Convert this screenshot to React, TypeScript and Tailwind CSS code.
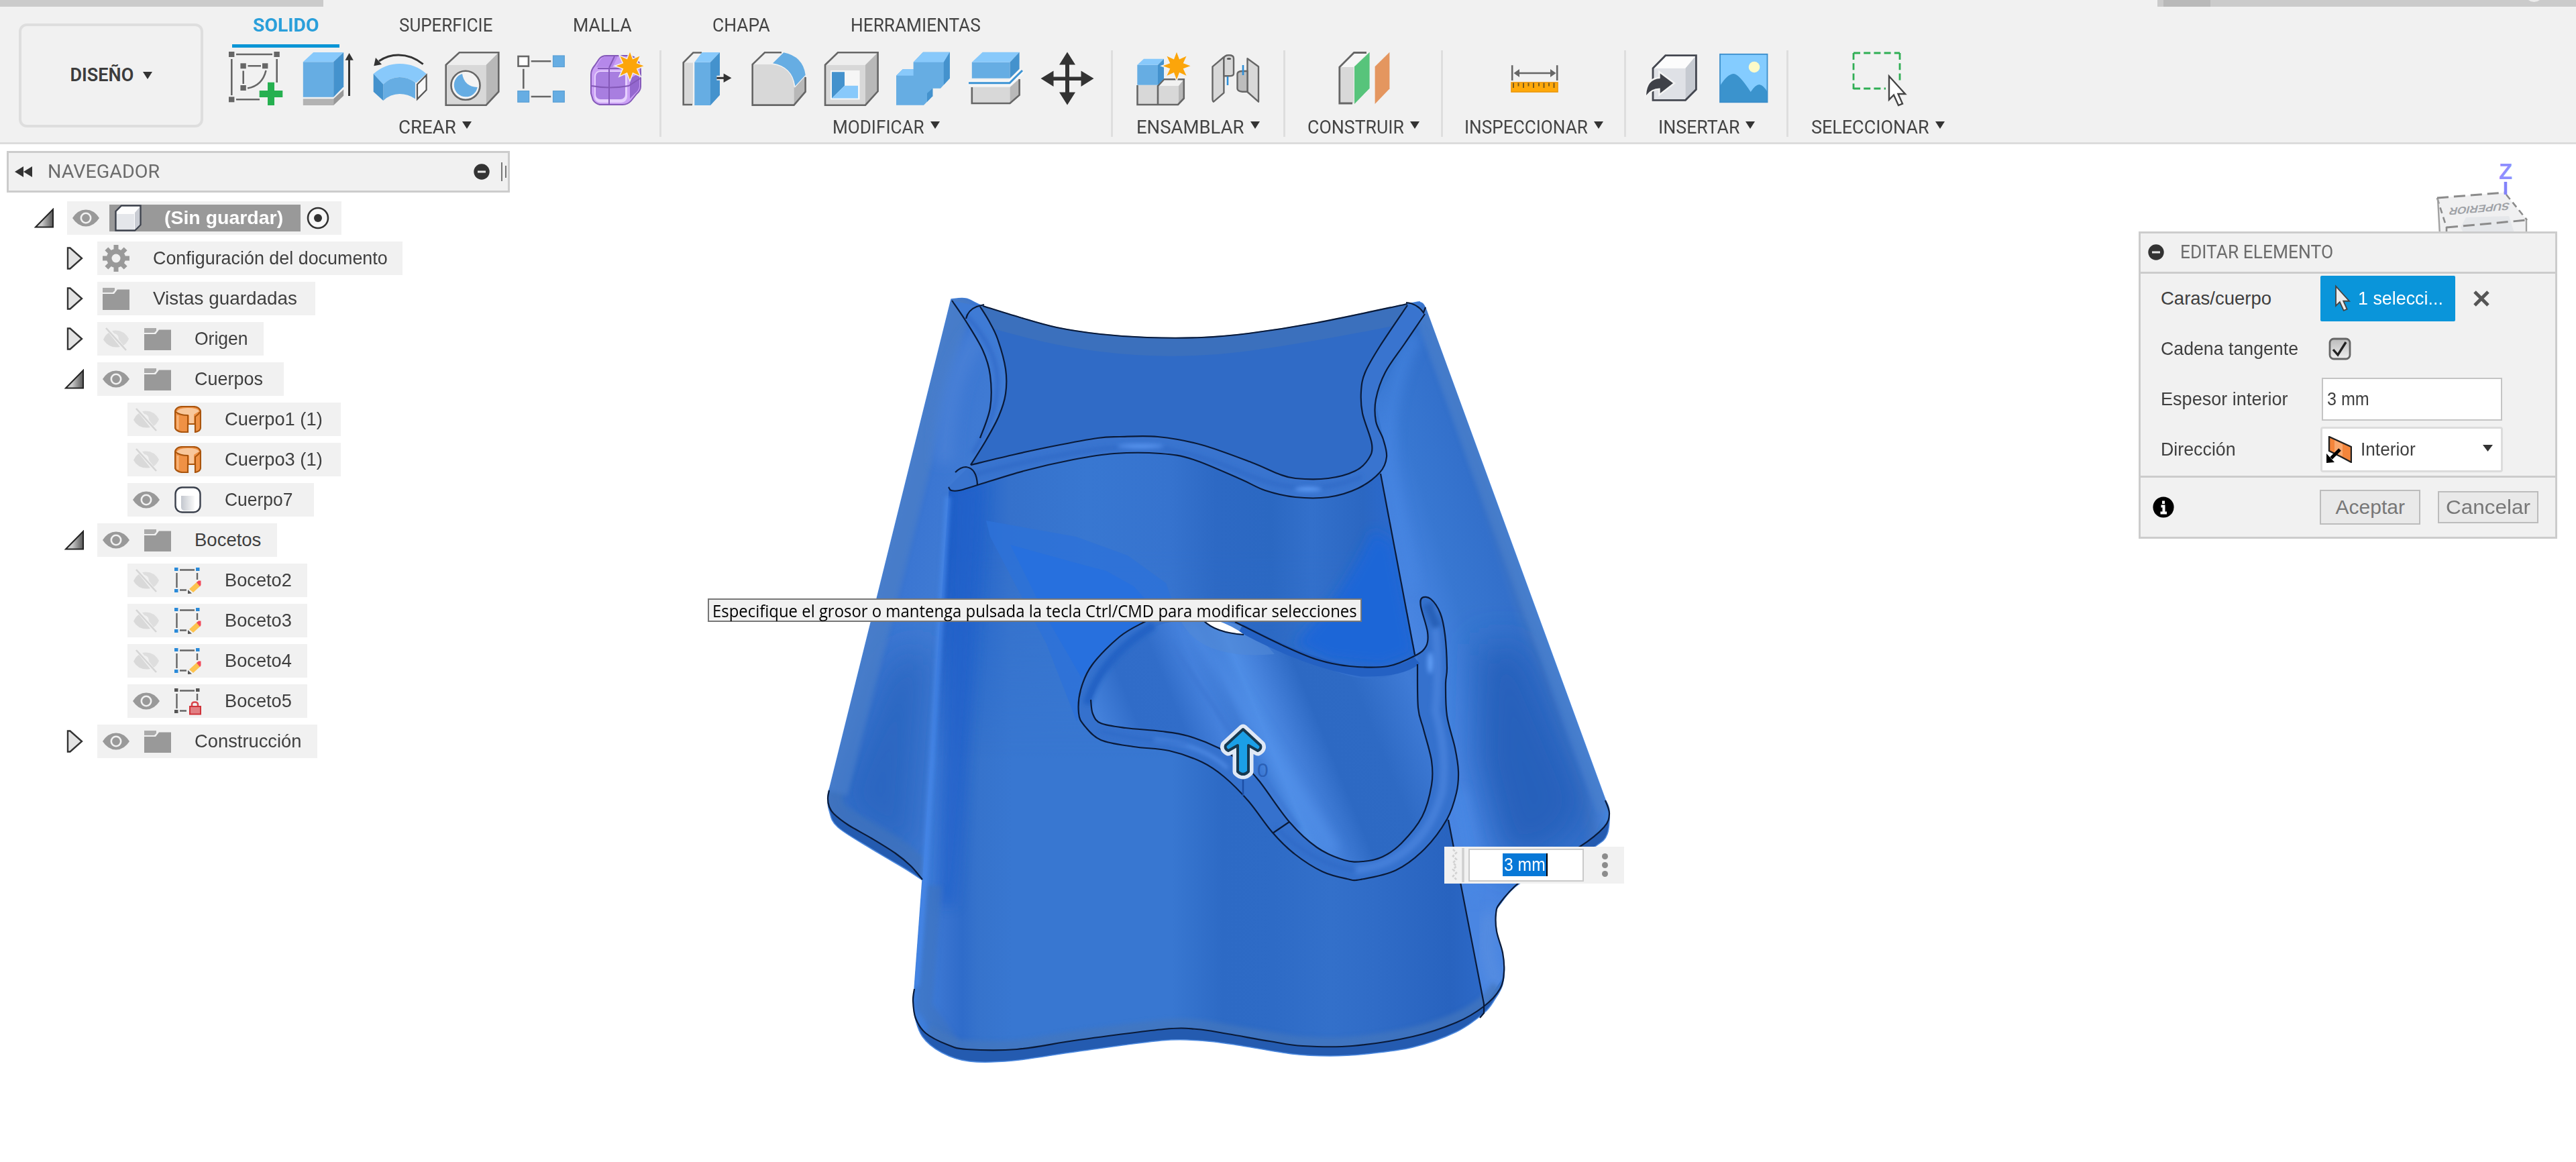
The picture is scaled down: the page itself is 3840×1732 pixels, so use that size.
import { useLayoutEffect, useRef, useState, type ReactNode } from "react";

/* ---------- text fitted to a given width ---------- */

function Fit({ w, className = "", children }: { w: number; className?: string; children: string }) {
  const ref = useRef<HTMLSpanElement>(null);
  const [scale, setScale] = useState(1);
  useLayoutEffect(() => {
    if (ref.current) setScale(w / ref.current.offsetWidth);
  }, [w, children]);
  return (
    <span className="inline-block shrink-0" style={{ width: w }}>
      <span
        ref={ref}
        className={`inline-block origin-left whitespace-nowrap ${className}`}
        style={{ transform: `scaleX(${scale})` }}
      >
        {children}
      </span>
    </span>
  );
}

/* ---------- smooth curve through points ---------- */

type P = [number, number];

function seg(pts: P[]): string {
  let d = "";
  for (let i = 0; i < pts.length - 1; i++) {
    const p0 = pts[Math.max(0, i - 1)];
    const p1 = pts[i];
    const p2 = pts[i + 1];
    const p3 = pts[Math.min(pts.length - 1, i + 2)];
    d += `C${p1[0] + (p2[0] - p0[0]) / 6} ${p1[1] + (p2[1] - p0[1]) / 6} ${p2[0] - (p3[0] - p1[0]) / 6} ${
      p2[1] - (p3[1] - p1[1]) / 6
    } ${p2[0]} ${p2[1]}`;
  }
  return d;
}
const curve = (pts: P[]) => `M${pts[0][0]} ${pts[0][1]}` + seg(pts);
const join = (...parts: P[][]) =>
  parts.map((p, i) => (i === 0 ? curve(p) : `L${p[0][0]} ${p[0][1]}` + seg(p))).join("") + "Z";
const rev = (pts: P[]): P[] => [...pts].reverse();

/* ---------- toolbar icons ---------- */

const FRONT = "#66ade3";
const TOP = "#88c9fb";
const SIDE = "#4492cd";
const LINE = "#666666";

function Ico({ children }: { children: ReactNode }) {
  return (
    <div className="flex w-[107.6px] justify-center">
      <svg viewBox="0 0 80 80" className="size-20 overflow-visible">
        {children}
      </svg>
    </div>
  );
}

function Star({ x, y }: { x: number; y: number }) {
  const pts: string[] = [];
  for (let i = 0; i < 16; i++) {
    const r = i % 2 ? 10.5 : 20.5;
    const a = (Math.PI * i) / 8;
    pts.push(`${x + r * Math.sin(a)},${y - r * Math.cos(a)}`);
  }
  return <polygon points={pts.join(" ")} fill="#fca50a" stroke="#f1f1f1" strokeWidth={3} paintOrder="stroke" />;
}

const IconSketch = () => (
  <Ico>
    <g stroke={LINE} strokeWidth={2.6} fill="none">
      <path d="M11 4H65M4.3 11V65M71.7 11V46M11 71.3H46M28.5 21.3H48M21.7 28.5V48M55.5 28Q50 51 28 54.5" />
    </g>
    <g fill={LINE}>
      {[
        [4.3, 4],
        [71.7, 4],
        [4.3, 71.3],
        [21.7, 21.3],
        [54.3, 21.3],
        [21.7, 54],
      ].map(([x, y]) => (
        <rect key={`${x}-${y}`} x={x - 4.3} y={y - 4} width={8.4} height={8} />
      ))}
    </g>
    <path d="M58 45.7H68V58H80.3V68H68V80H58V68H45.7V58H58Z" fill="#26b050" />
  </Ico>
);

const IconExtrude = () => (
  <Ico>
    <path d="M2.8 15.3H48.2V67.7H2.8Z" fill={FRONT} />
    <path d="M2.8 15.3L18.2 1H63.2L48.2 15.3Z" fill={TOP} />
    <path d="M48.2 15.3L63.2 1V52.3L48.2 67.7Z" fill={SIDE} />
    <path d="M2.8 70.3H48.2V80H2.8Z" fill="#b3b3b3" />
    <path d="M48.2 70.3L63.2 56.3V65.7L48.2 80Z" fill="#989898" />
    <path d="M71.5 66V10" stroke="#333" strokeWidth={3} />
    <path d="M65.5 12.7L71.6 2L77.8 12.7Z" fill="#333" />
  </Ico>
);

const IconRevolve = () => (
  <Ico>
    <path d="M.7 33Q18 18 39.7 18Q63 18 79.7 33L64.5 46.5Q52 38 39.7 38Q26 38 15.3 48.7Z" fill={TOP} />
    <path d="M15.3 48.7Q26 38 39.7 38Q52 38 63 46V70.3Q52 63 39.7 63Q26 63 15.3 73Z" fill={FRONT} />
    <path d="M.7 33L15.3 48.7V73L.7 59.7Z" fill={SIDE} />
    <path d="M66 48.7L79.6 35V57L66 70.8Z" fill="#f8f8f8" stroke="#555" strokeWidth={2.2} />
    <path d="M74.7 18.7Q58 5 38 5Q22 5 9 14" fill="none" stroke="#333" strokeWidth={2.8} />
    <path d="M4 9L13 19L1.3 21.3Z" fill="#333" />
  </Ico>
);

const IconHole = () => (
  <Ico>
    <path d="M.7 19.7H60.7V79.7H.7Z" fill="#d8d8d8" />
    <path d="M.7 19.7L20.7 1.3H79.3L60.7 19.7Z" fill="#eeeeee" />
    <path d="M60.7 19.7L79.3 1.3V59.7L60.7 79.7Z" fill="#b8b8b8" />
    <path d="M.7 19.7L20.7 1.3H79.3V59.7L60.7 79.7H.7Z" fill="none" stroke={LINE} strokeWidth={2.6} />
    <circle cx={30} cy={50.3} r={21.5} fill="#f4f4f4" stroke={LINE} strokeWidth={2.6} />
    <path d="M25 33A17.6 17.6 0 1 0 47.7 53Q28 52 25 33Z" fill={FRONT} />
  </Ico>
);

const IconPattern = () => (
  <Ico>
    <rect x={1.5} y={7} width={15.4} height={14.6} fill="#fff" stroke={LINE} strokeWidth={2.6} />
    <g fill={FRONT} stroke="#5a9fd4" strokeWidth={1.2}>
      <rect x={53.5} y={6} width={16.8} height={16.6} />
      <rect x={0.8} y={58.6} width={16.8} height={16.6} />
      <rect x={53.5} y={58.6} width={16.8} height={16.6} />
    </g>
    <path d="M20.7 14.3H50.3M9.3 25.7V55.3M20.7 67H50.3" stroke={LINE} strokeWidth={2.6} />
  </Ico>
);

const IconForm = () => (
  <Ico>
    <path
      d="M2 34Q2 27 8 20L14 11Q18 6 25 6H58Q76 8 76 30V52Q76 58 70 63L62 73Q57 79 49 79H15Q8 77 5 72L2 62Z"
      fill="#caa0f5"
      stroke="#8459b8"
      strokeWidth={2}
    />
    <path d="M60 40L74 32V52Q73 58 68 62L60 70Z" fill="#9468cf" />
    <path d="M22 7H42L34 23H10Q16 10 22 7Z" fill="#b588ea" />
    <rect x={7} y={28} width={49} height={48} rx={9} fill="#e6d0fd" />
    <rect x={9} y={30} width={44} height={41} rx={7} fill="#a87ee0" />
    <path d="M29 24V78M3 51Q30 56 58 51L75 40M29 24L37 7M12 25H60" fill="none" stroke="#8459b8" strokeWidth={2} />
    <Star x={60} y={21.3} />
  </Ico>
);

const IconPress = () => (
  <Ico>
    <path d="M4.7 16.3H19V79H4.7Z" fill="#d8d8d8" />
    <path d="M4.7 16.3L19.3 1.5H31L20 16.3Z" fill="#f1f1f1" />
    <path d="M32 1.5H19.3L4.7 16.3V79H18" fill="none" stroke={LINE} strokeWidth={2.6} />
    <path d="M21.3 15.7H45V80H21.3Z" fill={FRONT} />
    <path d="M21.3 15.7L32.5 1H59L45 15.7Z" fill={TOP} />
    <path d="M45 15.7L59 1V64.7L45 80Z" fill={SIDE} />
    <path d="M54.4 39.3H66M64.6 32.5V46L76.5 39.3Z" fill="#333" stroke="#f1f1f1" strokeWidth={7} />
    <path d="M54.4 39.3H67" stroke="#333" strokeWidth={3} />
    <path d="M64.6 32.5V46L76.5 39.3Z" fill="#333" />
  </Ico>
);

const IconFillet = () => (
  <Ico>
    <path d="M.6 19H29.3Q60 22 62.5 51.3V79.7H.6Z" fill="#d8d8d8" />
    <path d="M.6 19L19 1.3H45L30 19Z" fill="#f1f1f1" />
    <path d="M62.5 53L79.7 36V59.7L62.5 79.7Z" fill="#b8b8b8" />
    <path d="M44 1.3H19L.7 19V79.6H62.5L79.6 59.7V38" fill="none" stroke={LINE} strokeWidth={2.6} />
    <path d="M31 17.3L47.2 1.3Q76 7 79.7 34.7L64.4 51.3Q60 22 31 17.3Z" fill={FRONT} stroke="#f1f1f1" strokeWidth={2.4} paintOrder="stroke" />
  </Ico>
);

const IconShell = () => (
  <Ico>
    <path d="M1 19.7H61V79.7H1Z" fill="#d8d8d8" />
    <path d="M1 19.7L20 1.3H79.6L61 19.7Z" fill="#eeeeee" />
    <path d="M61 19.7L79.6 1.3V59L61 79.7Z" fill="#b8b8b8" />
    <path d="M1 19.7L20 1.3H79.6V59L61 79.7H1Z" fill="none" stroke={LINE} strokeWidth={2.6} />
    <path d="M9 28H52.6V71.6H9Z" fill="#f6f6f6" />
    <path d="M11 30.3H30V50.7L11 69.5Z" fill={SIDE} />
    <path d="M30 50.7H50V69.5H11Z" fill={TOP} />
  </Ico>
);

const IconCombine = () => (
  <Ico>
    <path d="M0 35.7L9.6 26.3H25.6V15.7L40 .7H79.8V39.7L66 54.7H54.3V66.3L41 79.7H0Z" fill={FRONT} />
    <path d="M25.6 15.7L40 .7H79.8L70.8 15.7Z" fill={TOP} />
    <path d="M0 35.7L9.6 26.3H25.6V35.7Z" fill={TOP} />
    <path d="M70.8 15.7L79.8 .7V39.7L70.8 49.5Z" fill={SIDE} />
    <path d="M46 62L54.3 54.7V66.3L46 74.7Z" fill={SIDE} />
  </Ico>
);

const IconSplit = () => (
  <Ico>
    <path d="M4.8 15.7H61.5V39.7H4.8Z" fill={FRONT} />
    <path d="M4.8 15.7L20.7 .7H75.6L61.5 15.7Z" fill={TOP} />
    <path d="M61.5 15.7L75.6 .7V25.7L61.5 39.7Z" fill={SIDE} />
    <path d="M4.8 53H61.5V77H4.8Z" fill="#d8d8d8" />
    <path d="M61.5 53L75.6 40.3V64.7L61.5 77Z" fill="#b8b8b8" />
    <path d="M4.8 53V77H61.5L75.6 64.7V41" fill="none" stroke={LINE} strokeWidth={2.6} />
    <path d="M0 46.7H61L80 28" fill="none" stroke="#f8f8f8" strokeWidth={8} />
    <path d="M0 46.7H61L80 28" fill="none" stroke="#3d94d4" strokeWidth={3} />
  </Ico>
);

const IconMove = () => (
  <Ico>
    <path
      d="M40 .5L52 19.5H43V37.5H60.5V28.5L79.5 40L60.5 52V43H43V60.5H52L40 79.5L28 60.5H37V43H19.5V52L.5 40L19.5 28.5V37.5H37V19.5H28Z"
      fill="#333"
    />
  </Ico>
);

const IconComponent = () => (
  <Ico>
    <path d="M1.3 49.7H63V79.7H1.3Z" fill="#d8d8d8" />
    <path d="M32 51L41 41.3H70.8L63 51Z" fill="#f1f1f1" />
    <path d="M63 51L70.8 41.3V69.7L63 79.7Z" fill="#b8b8b8" />
    <path d="M1.5 50V79H62L70.8 69.7V41.3H41L32 51V79" fill="none" stroke={LINE} strokeWidth={2.6} />
    <path d="M1.3 19.7H32V49.7H1.3Z" fill={FRONT} />
    <path d="M1.3 19.7L11 10.7H41L32 19.7Z" fill={TOP} />
    <path d="M32 19.7L41 10.7V40.3L32 49.7Z" fill={SIDE} />
    <Star x={60} y={21.3} />
  </Ico>
);

const IconJoint = () => (
  <Ico>
    <g fill="#d8d8d8" stroke={LINE} strokeWidth={2.4} strokeLinejoin="round">
      <path d="M6.5 22.3L23.4 8V61.3L8 74.7Q6.5 74 6.5 70Z" />
      <path d="M23.4 10Q24 5.3 31 5.3Q38 5.3 38 10V33Q38 36.3 31 36.3H23.4Z" />
      <path d="M58.5 10.3L75 22.3V74.7L58.5 60Z" />
      <path d="M43.5 33Q44 29 51 29H58.5V59.7H51Q43.5 59 43.5 55Z" fill="#bdbdbd" />
    </g>
    <ellipse cx={31} cy={10.5} rx={3.2} ry={1.6} fill="#555" />
    <path d="M29 37V50M52 20V35" stroke="#2f8fd8" strokeWidth={2.6} />
  </Ico>
);

const IconConstruct = () => (
  <Ico>
    <path d="M2.5 23H24V77H2.5Z" fill="#d8d8d8" />
    <path d="M2.5 23L24.4 1.3H45L25 23Z" fill="#f6f6f6" />
    <path d="M43 1.5H24.4L2.8 23V77H22" fill="none" stroke={LINE} strokeWidth={2.8} />
    <path d="M25 22.3L47.6 .7V54.7L25 78Z" fill="#57c47b" stroke="#f1f1f1" strokeWidth={2} paintOrder="stroke" />
    <path d="M55.6 22.3L77.4 .7V55.3L55.6 78Z" fill="#e4965f" />
  </Ico>
);

const IconMeasure = () => (
  <Ico>
    <path d="M6.2 20.3V43M73.2 20.3V43M14 32H66" stroke={LINE} strokeWidth={2.6} />
    <path d="M8.5 32L17 26V38ZM71.5 32L63 26V38Z" fill={LINE} />
    <rect x={5} y={46} width={69} height={14} fill="#ffa90a" stroke="#eb960b" strokeWidth={1.6} />
    <path
      d="M8 46.5V54M15.5 46.5V51.5M23 46.5V54M30.5 46.5V51.5M38 46.5V54M46 46.5V51.5M53.5 46.5V54M61 46.5V51.5M68.5 46.5V54"
      stroke="#7a5a1c"
      strokeWidth={2}
    />
  </Ico>
);

const IconInsert = () => (
  <Ico>
    <path d="M13 24.7H61.5V72.3H13Z" fill="#dfe1e6" />
    <path d="M13 24.7L31.7 5.7H77.4L61.5 24.7Z" fill="#fcfcfc" />
    <path d="M61.5 24.7L77.4 5.7V56.3L61.5 72.3Z" fill="#c6cad1" />
    <path d="M13 24.7L31.7 5.7H77.4V56.3L61.5 72.3H13Z" fill="none" stroke="#444750" strokeWidth={2.8} />
    <path
      d="M43 47L23.7 32.5V40Q4 41 3 65Q11 54 23.7 54.5V62Z"
      fill="#3f4148"
      stroke="#f4f4f4"
      strokeWidth={5}
      paintOrder="stroke"
    />
  </Ico>
);

const IconImage = () => (
  <Ico>
    <rect x={5} y={3.8} width={70.5} height={71.5} fill="#84ccff" />
    <path d="M5 51Q16 33 25.5 33Q33 33 50.7 60Q58 49 63.5 49Q70 50 75.5 60V75.3H5Z" fill="#3b93cd" />
    <circle cx={56} cy={23} r={8.3} fill="#fdfbc9" />
    <rect x={5} y={3.8} width={70.5} height={71.5} fill="none" stroke="#3b8ecb" strokeWidth={1.8} />
  </Ico>
);

const CURSOR = "M0 0V35L7 28L14 43.5L20 41L13.5 26.5H24Z";

const IconSelect = () => (
  <Ico>
    <path d="M2 2H71" stroke="#2fae54" strokeWidth={2.8} strokeDasharray="10 5.2" />
    <path d="M2 55H50" stroke="#2fae54" strokeWidth={2.8} strokeDasharray="10 5.2" />
    <path d="M2 2V56M71 2V46" stroke="#2fae54" strokeWidth={2.8} strokeDasharray="10 5.2" />
    <path d={CURSOR} transform="translate(55 36.5)" fill="#fff" stroke="#444" strokeWidth={2.4} />
  </Ico>
);

/* ---------- toolbar ---------- */

const Caret = () => (
  <svg viewBox="0 0 14 11" className="h-[11px] w-[14px]">
    <path d="M0 0H14L7 11Z" fill="#333" />
  </svg>
);

function Group({ width, label, labelWidth, last = false, children }: { width: string; label: string; labelWidth: number; last?: boolean; children: ReactNode }) {
  return (
    <div className={`flex h-[129px] flex-col items-center ${width} ${last ? "" : "border-r-3 border-[#dedede]"}`}>
      <div className="flex pt-0.5 pl-[3px]">{children}</div>
      <div className="mt-3.5 flex h-[38px] items-center gap-[9px] leading-[38px]">
        <Fit w={labelWidth}>{label}</Fit>
        <div className="pb-2">
          <Caret />
        </div>
      </div>
    </div>
  );
}

function Toolbar() {
  return (
    <header className="flex h-[215px] flex-col border-b-3 border-[#dcdcdc] bg-[#f1f1f1] font-['Roboto','Liberation_Sans',sans-serif] text-[28px] text-[#444]">
      <div className="flex h-2.5 justify-between">
        <div className="w-[482px] bg-[#cbcbcb]" />
        <div className="flex w-[624px] overflow-hidden bg-[#cbcbcb] pl-[9px]">
          <div className="w-[70px] bg-[#b9b9b9]" />
          <div className="-mt-6 ml-[469px] size-[27px] rounded-full bg-[#ececec]" />
        </div>
      </div>
      <div className="flex">
        <div className="pt-[25px] pl-7">
          <div className="flex h-[155px] w-[275px] items-center justify-center gap-[13px] rounded-xl border-4 border-[#dedede] text-[27px] font-semibold text-[#3c3c3c]">
            <Fit w={95}>DISEÑO</Fit>
            <Caret />
          </div>
        </div>
        <div className="flex flex-col">
          <nav className="flex h-[65px] gap-[120px] pl-[43px] leading-14">
            <div className="flex h-[61px] w-40 flex-col items-center justify-between">
              <Fit w={98} className="font-bold text-[#2a9fda]">
                SOLIDO
              </Fit>
              <div className="h-2 w-40 bg-[#0b95d5]" />
            </div>
            <div className="-ml-[31px] flex gap-[120px]">
              <Fit w={139}>SUPERFICIE</Fit>
              <Fit w={88}>MALLA</Fit>
              <Fit w={86}>CHAPA</Fit>
              <Fit w={194}>HERRAMIENTAS</Fit>
            </div>
          </nav>
          <div className="flex pl-[11px]">
            <Group width="w-[672px]" label="CREAR" labelWidth={86}>
              <IconSketch />
              <IconExtrude />
              <IconRevolve />
              <IconHole />
              <IconPattern />
              <IconForm />
            </Group>
            <Group width="w-[673px]" label="MODIFICAR" labelWidth={137}>
              <IconPress />
              <IconFillet />
              <IconShell />
              <IconCombine />
              <IconSplit />
              <IconMove />
            </Group>
            <Group width="w-[257px]" label="ENSAMBLAR" labelWidth={161}>
              <IconComponent />
              <IconJoint />
            </Group>
            <Group width="w-[235px]" label="CONSTRUIR" labelWidth={144}>
              <IconConstruct />
            </Group>
            <Group width="w-[273px]" label="INSPECCIONAR" labelWidth={184}>
              <IconMeasure />
            </Group>
            <Group width="w-[242px]" label="INSERTAR" labelWidth={121}>
              <IconInsert />
              <IconImage />
            </Group>
            <Group width="w-[267px]" label="SELECCIONAR" labelWidth={176} last>
              <IconSelect />
            </Group>
          </div>
        </div>
      </div>
    </header>
  );
}

/* ---------- browser tree ---------- */

const MinusDot = () => (
  <svg viewBox="0 0 24 24" className="size-6">
    <circle cx={12} cy={12} r={11.7} fill="#333" />
    <path d="M6 12H18" stroke="#e8e8e8" strokeWidth={3} />
  </svg>
);

const Eye = () => (
  <svg viewBox="0 0 40 40" className="size-10">
    <path d="M0 20Q8 7.5 20 7.5Q32 7.5 40 20Q32 32.5 20 32.5Q8 32.5 0 20Z" fill="#999" />
    <circle cx={20} cy={20} r={7.2} fill="#999" stroke="#f1f1f1" strokeWidth={2.6} />
  </svg>
);

const EyeOff = () => (
  <svg viewBox="0 0 40 40" className="size-10">
    <path d="M1 21Q5 13 9 11L26 32Q9 35 1 21Z" fill="#d9d9d9" />
    <path d="M14 8Q31 5 39 20Q36 27 31 30L24 21Q24 13 17 12Z" fill="#dedede" />
    <path d="M5 4L35 37" stroke="#d5d5d5" strokeWidth={2.6} />
  </svg>
);

const Folder = () => (
  <svg viewBox="0 0 40 40" className="size-10">
    <path d="M0 4H18V8L15 11H0Z" fill="#aaa" />
    <path d="M0 13H17L22 6.5H40V37H0Z" fill="#999" />
  </svg>
);

const Gear = () => (
  <svg viewBox="0 0 40 40" className="size-10">
    <g fill="#999">
      <path d="M16.5 0H23.5V40H16.5Z" />
      <path d="M16.5 0H23.5V40H16.5Z" transform="rotate(45 20 20)" />
      <path d="M16.5 0H23.5V40H16.5Z" transform="rotate(90 20 20)" />
      <path d="M16.5 0H23.5V40H16.5Z" transform="rotate(135 20 20)" />
      <circle cx={20} cy={20} r={14} />
    </g>
    <circle cx={20} cy={20} r={6.5} fill="#f1f1f1" />
  </svg>
);

const BodyOrange = () => (
  <svg viewBox="0 0 40 40" className="size-10">
    <path d="M1 8Q3 1 12 1H28Q37 1 39 8V33Q38 38 31 39V27H20V39H11Q3 38 1 33Z" fill="#ef9145" stroke="#a9540c" strokeWidth={2.2} />
    <path d="M3 9Q6 3 20 3Q34 3 37 8Q30 12 29 13V26H22V14Q8 14 3 9Z" fill="#f8c79b" />
    <path d="M2 9Q8 14 20 14V39M31 39V16Q36 13 38 9" fill="none" stroke="#a9540c" strokeWidth={2} />
    <path d="M5 14V35" stroke="#f9b67c" strokeWidth={3} />
  </svg>
);

const BodySolid = () => (
  <svg viewBox="0 0 40 40" className="size-10">
    <defs>
      <linearGradient id="cyl" x1="0" x2="1">
        <stop offset="0" stopColor="#c3c7ce" />
        <stop offset="1" stopColor="#fafafa" />
      </linearGradient>
    </defs>
    <rect x={1.5} y={1.5} width={37} height={37} rx={10} fill="#fff" stroke="#3b414d" strokeWidth={2.4} />
    <path d="M10 14H30V36H14Q10 35 10 31Z" fill="url(#cyl)" />
  </svg>
);

const SketchIcon = ({ locked = false }: { locked?: boolean }) => (
  <svg viewBox="0 0 40 40" className="size-10 overflow-visible">
    <path d="M8 4.5H30M3.5 9V31M34 9V19M8 34.5H18" stroke="#666" strokeWidth={2.4} />
    <g fill={locked ? "#555" : "#2a8ad8"}>
      <rect x={0} y={1} width={5.5} height={5} />
      <rect x={32} y={1} width={5.5} height={5} />
      <rect x={0} y={33} width={5.5} height={5} />
    </g>
    {locked ? (
      <g>
        <path d="M26 28V25Q26 21.5 30.5 21.5Q35 21.5 35 25V28" fill="none" stroke="#d9484e" strokeWidth={2.6} />
        <rect x={23} y={28} width={16} height={11.5} fill="#e27f83" stroke="#cf3339" strokeWidth={2} />
      </g>
    ) : (
      <g>
        <path d="M22 33L34 22L39 28L28 38Z" fill="#fcc34f" />
        <path d="M33 23L36 20.5H39.5V27L38 29Z" fill="#f2495a" />
        <path d="M20 34L26 39.5L20 40Z" fill="#555" />
      </g>
    )}
  </svg>
);

const Expanded = () => (
  <svg viewBox="0 0 30 30" className="size-[30px]">
    <defs>
      <linearGradient id="tri" x1="0.1" x2="1">
        <stop offset="0.3" stopColor="#c9c9c9" />
        <stop offset="1" stopColor="#555" />
      </linearGradient>
    </defs>
    <path d="M2 28.5L28 2V28.5Z" fill="url(#tri)" stroke="#222" strokeWidth={2} />
  </svg>
);

const Collapsed = () => (
  <svg viewBox="0 0 30 34" className="h-[34px] w-[30px]">
    <path d="M5 1.5H8.5L26 17L8.5 32.5H5Z" fill="#e3e3e3" stroke="#333" strokeWidth={2.4} />
  </svg>
);

type Item = {
  level: 2 | 3;
  arrow?: "open" | "closed";
  eye?: "on" | "off";
  icon: ReactNode;
  name: string;
  textWidth: number;
  width: number;
};

const ITEMS: Item[] = [
  { level: 2, arrow: "closed", icon: <Gear />, name: "Configuración del documento", textWidth: 350, width: 455 },
  { level: 2, arrow: "closed", icon: <Folder />, name: "Vistas guardadas", textWidth: 215, width: 325 },
  { level: 2, arrow: "closed", eye: "off", icon: <Folder />, name: "Origen", textWidth: 80, width: 248 },
  { level: 2, arrow: "open", eye: "on", icon: <Folder />, name: "Cuerpos", textWidth: 102, width: 278 },
  { level: 3, eye: "off", icon: <BodyOrange />, name: "Cuerpo1 (1)", textWidth: 146, width: 318 },
  { level: 3, eye: "off", icon: <BodyOrange />, name: "Cuerpo3 (1)", textWidth: 146, width: 318 },
  { level: 3, eye: "on", icon: <BodySolid />, name: "Cuerpo7", textWidth: 102, width: 278 },
  { level: 2, arrow: "open", eye: "on", icon: <Folder />, name: "Bocetos", textWidth: 99, width: 268 },
  { level: 3, eye: "off", icon: <SketchIcon />, name: "Boceto2", textWidth: 100, width: 268 },
  { level: 3, eye: "off", icon: <SketchIcon />, name: "Boceto3", textWidth: 100, width: 268 },
  { level: 3, eye: "off", icon: <SketchIcon />, name: "Boceto4", textWidth: 100, width: 268 },
  { level: 3, eye: "on", icon: <SketchIcon locked />, name: "Boceto5", textWidth: 100, width: 268 },
  { level: 2, arrow: "closed", eye: "on", icon: <Folder />, name: "Construcción", textWidth: 160, width: 328 },
];

function TreeRow({ item }: { item: Item }) {
  return (
    <div className={`flex h-[50px] items-center ${item.level === 2 ? "pl-24" : "pl-[190px]"}`}>
      {item.level === 2 && <div className="w-[49px]">{item.arrow === "open" ? <Expanded /> : <Collapsed />}</div>}
      <div className="flex h-[50px] items-center bg-[#f1f1f1] pl-2" style={{ width: item.width }}>
        {item.eye && <div className="mr-[22px]">{item.eye === "on" ? <Eye /> : <EyeOff />}</div>}
        {item.icon}
        <div className="ml-[35px] flex">
          <Fit w={item.textWidth}>{item.name}</Fit>
        </div>
      </div>
    </div>
  );
}

function Navigator() {
  return (
    <aside className="w-[770px] pt-2.5 text-[27.5px] leading-[46px] text-[#3f3f3f]">
      <div className="ml-2.5 flex h-[62px] w-[750px] items-center border-3 border-[#cccccc] bg-[#f1f1f1] pl-[9px] text-[#6c6c6c]">
        <svg viewBox="0 0 26 16" className="h-4 w-[26px]">
          <path d="M13 0V16L0 8ZM26 0V16L13 8Z" fill="#333" />
        </svg>
        <div className="ml-[23px] flex grow">
          <Fit w={167} className="font-['Roboto','Liberation_Sans',sans-serif] text-[28px]">
            NAVEGADOR
          </Fit>
        </div>
        <MinusDot />
        <div className="mr-0.5 ml-[17px] flex items-center gap-1">
          <div className="h-7 w-0.5 bg-[#777]" />
          <div className="h-[18px] w-0.5 bg-[#777]" />
        </div>
      </div>
      <div className="flex flex-col gap-2.5 pt-[13px]">
        <div className="flex h-[50px] items-center pl-[51px]">
          <div className="w-[49px]">
            <Expanded />
          </div>
          <div className="flex h-[50px] w-[409px] items-center bg-[#f1f1f1] pl-2">
            <Eye />
            <div className="ml-[15px] flex h-10 w-[285px] items-center bg-[#999] pl-2">
              <svg viewBox="0 0 40 40" className="size-10">
                <path d="M1.5 10L10 1.5H38.5V30L30 38.5H1.5Z" fill="#fdfdfd" stroke="#3d424d" strokeWidth={2.4} />
                <path d="M3 14H29V37H3Z" fill="#e4e6ea" />
                <path d="M30 12L37 4V30L30 37Z" fill="#c9ccd3" />
              </svg>
              <div className="ml-[34px] flex">
                <Fit w={177} className="font-bold text-white">
                  (Sin guardar)
                </Fit>
              </div>
            </div>
            <svg viewBox="0 0 34 34" className="ml-[9px] size-[34px]">
              <circle cx={17} cy={17} r={15} fill="#f8f8f8" stroke="#333" strokeWidth={2.6} />
              <circle cx={17} cy={17} r={6} fill="#333" />
            </svg>
          </div>
        </div>
        {ITEMS.map((item) => (
          <TreeRow key={item.name} item={item} />
        ))}
      </div>
    </aside>
  );
}

/* ---------- modelled body ---------- */

const topEdge: P[] = [[1418, 446], [1440, 445], [1465, 456], [1520, 473], [1575, 488], [1640, 498], [1710, 503], [1791, 503], [1861, 497], [1963, 481], [2098, 453], [2118, 451], [2125, 459]];
const rightLow: P[] = [[2393, 1192], [2399, 1208], [2396, 1243], [2379, 1261], [2330, 1288], [2265, 1317], [2236, 1348], [2230, 1362], [2231, 1388], [2242, 1435], [2240, 1467], [2228, 1490], [2212, 1510], [2171, 1538], [2106, 1561], [2036, 1571], [1983, 1574], [1926, 1571], [1840, 1557], [1788, 1551], [1731, 1551], [1608, 1567], [1510, 1581], [1445, 1582], [1404, 1569], [1375, 1545], [1363, 1510], [1363, 1474]];
const leftLow: P[] = [[1375, 1312], [1351, 1296], [1302, 1267], [1249, 1233], [1236, 1208], [1234, 1186], [1237, 1174]];
const leftHem: P[] = [[1236, 1178], [1234, 1190], [1236, 1202], [1243, 1213], [1265, 1230], [1300, 1250], [1335, 1272], [1358, 1291], [1375, 1311]];
const hem: P[] = [[1363, 1474], [1361, 1492], [1365, 1518], [1380, 1540], [1412, 1557], [1441, 1564], [1516, 1564], [1608, 1550], [1735, 1534], [1784, 1534], [1830, 1541], [1893, 1552], [1942, 1559], [2016, 1559], [2106, 1545], [2171, 1524], [2212, 1500], [2236, 1474], [2242, 1448], [2240, 1420], [2231, 1388], [2230, 1362], [2236, 1346], [2265, 1315], [2310, 1285], [2355, 1262], [2391, 1233], [2399, 1213], [2393, 1193]];

const ribLeftOuter: P[] = [[1461, 457], [1474, 478], [1487, 505], [1499, 550], [1499, 587], [1489, 620], [1470, 656], [1447, 693]];
const ribLeftInner: P[] = [[1419, 448], [1440, 479], [1465, 522], [1476, 559], [1476, 608], [1461, 653]];
const ribTop: P[] = [[1447, 693], [1514, 677], [1570, 665], [1636, 653], [1669, 651], [1726, 651], [1791, 663], [1865, 689], [1905, 706], [1931, 713], [1980, 713], [2020, 702], [2040, 684], [2045, 662], [2031, 616], [2029, 583], [2035, 555], [2057, 516], [2098, 455]];
const ribBottom: P[] = [[1414, 726], [1418, 731], [1430, 731], [1457, 723], [1526, 702], [1600, 685], [1661, 676], [1730, 676], [1779, 685], [1849, 714], [1886, 731], [1931, 741], [1980, 741], [2024, 728], [2057, 704], [2067, 681], [2062, 655], [2051, 628], [2051, 595], [2065, 555], [2094, 512], [2124, 468]];

const pocketOuter: P[] = [[1735, 914], [1706, 927], [1669, 949], [1628, 991], [1611, 1028], [1608, 1063], [1616, 1081], [1641, 1103], [1690, 1113], [1743, 1119], [1792, 1136], [1825, 1158], [1861, 1194], [1897, 1241], [1930, 1273], [1971, 1299], [2008, 1310], [2028, 1311], [2081, 1297], [2124, 1265], [2157, 1221], [2171, 1182], [2174, 1150], [2169, 1115], [2157, 1067], [2155, 1020], [2157, 995], [2154, 946], [2147, 914], [2133, 893], [2120, 891], [2118, 904], [2128, 942], [2126, 963], [2110, 977], [2069, 993], [2012, 993], [1963, 983], [1910, 961], [1841, 927]];
const pocketInner: P[] = [[1626, 1043], [1629, 1064], [1641, 1078], [1678, 1085], [1731, 1090], [1771, 1097], [1817, 1115], [1850, 1136], [1877, 1164], [1922, 1225], [1963, 1263], [2004, 1282], [2032, 1284], [2061, 1277], [2089, 1257], [2120, 1217], [2134, 1170], [2134, 1134], [2122, 1087], [2114, 1055], [2113, 990]];
const pocketLip: P[] = [[2113, 978], [2090, 1000], [2055, 1011], [2010, 1007], [1950, 983], [1880, 945], [1820, 925], [1760, 925], [1715, 938], [1665, 980], [1640, 1012], [1626, 1043]];

const silhouette =
  curve(topEdge) + `L${rightLow[0][0]} ${rightLow[0][1]}` + seg(rightLow) + `L${leftLow[0][0]} ${leftLow[0][1]}` + seg(leftLow) + "Z";
const face = curve(topEdge) + "L2393 1193" + seg(rev(hem)) + "L1375 1311" + seg(rev(leftHem)) + "Z";

function Model() {
  return (
    <svg viewBox="1200 420 1240 1180" className="ml-[430px] h-[1180px] w-[1240px]">
      <defs>
        <clipPath id="face">
          <path d={face} />
        </clipPath>
        <clipPath id="pocket">
          <path d={join(pocketInner, pocketLip)} />
        </clipPath>
        <clipPath id="back">
          <path d={join(topEdge.slice(2, 11), rev(ribTop), rev(ribLeftOuter))} />
        </clipPath>
        <clipPath id="panel">
          <path d="M1415 725L1740 640L2058 706L2112 975L2212 1500V1600H1355L1375 1312Z" />
        </clipPath>
        <clipPath id="wing">
          <path d="M2125 440L2160 440L2440 1180L2440 1330L2236 1345L2245 1450L2212 1500L2159 1221L2110 975L2058 706L2068 681L2051 600L2094 512Z" />
        </clipPath>
        <linearGradient id="fadeDown" gradientUnits="userSpaceOnUse" x1="0" x2="0" y1="820" y2="1130">
          <stop offset="0" stopColor="#fff" />
          <stop offset="1" stopColor="#000" />
        </linearGradient>
        <mask id="upperMask" maskUnits="userSpaceOnUse" x="1200" y="420" width="1240" height="1180">
          <rect x={1200} y={420} width={1240} height={1180} fill="url(#fadeDown)" />
        </mask>
        <linearGradient id="front" gradientUnits="userSpaceOnUse" x1="1375" x2="2220" y1="0" y2="0">
          <stop offset="0" stopColor="#3f7fdc" />
          <stop offset="0.04" stopColor="#3873cf" />
          <stop offset="0.07" stopColor="#2f6cca" />
          <stop offset="0.1" stopColor="#3673cc" />
          <stop offset="0.16" stopColor="#3877d1" />
          <stop offset="0.44" stopColor="#3877d1" />
          <stop offset="0.53" stopColor="#2d6ac5" />
          <stop offset="0.62" stopColor="#2e6bc6" />
          <stop offset="0.72" stopColor="#3370ca" />
          <stop offset="0.8" stopColor="#306cc7" />
          <stop offset="0.93" stopColor="#2863bf" />
          <stop offset="1" stopColor="#2d6ac9" />
        </linearGradient>
        <linearGradient id="upper" gradientUnits="userSpaceOnUse" x1="1415" x2="2100" y1="0" y2="0">
          <stop offset="0" stopColor="#1d5cc4" />
          <stop offset="0.06" stopColor="#2465cb" />
          <stop offset="0.13" stopColor="#3571cb" />
          <stop offset="0.3" stopColor="#3877d1" />
          <stop offset="0.48" stopColor="#3673ce" />
          <stop offset="0.58" stopColor="#2d69c4" />
          <stop offset="0.7" stopColor="#2b68c2" />
          <stop offset="0.79" stopColor="#3370cb" />
          <stop offset="0.9" stopColor="#2b67c2" />
          <stop offset="1" stopColor="#2a6bd4" />
        </linearGradient>
        <linearGradient id="left" gradientUnits="userSpaceOnUse" x1="1290" y1="800" x2="1410" y2="830">
          <stop offset="0" stopColor="#4a86e0" />
          <stop offset="0.45" stopColor="#4479c8" />
          <stop offset="0.6" stopColor="#3b76d2" />
          <stop offset="1" stopColor="#3f7ad3" />
        </linearGradient>
        <linearGradient id="right" gradientUnits="userSpaceOnUse" x1="2080" y1="880" x2="2270" y2="820">
          <stop offset="0" stopColor="#4a86e2" />
          <stop offset="0.22" stopColor="#4280dc" />
          <stop offset="0.42" stopColor="#3877d1" />
          <stop offset="0.78" stopColor="#3370cb" />
          <stop offset="0.87" stopColor="#3d74c6" />
          <stop offset="1" stopColor="#4a86dd" />
        </linearGradient>
        <linearGradient id="inside" gradientUnits="userSpaceOnUse" x1="1640" y1="1070" x2="2100" y2="880">
          <stop offset="0" stopColor="#4380da" />
          <stop offset="0.1" stopColor="#306cc8" />
          <stop offset="0.22" stopColor="#316dc9" />
          <stop offset="0.32" stopColor="#4581dc" />
          <stop offset="0.38" stopColor="#3e7ad4" />
          <stop offset="0.44" stopColor="#4f8ee6" />
          <stop offset="0.5" stopColor="#4480da" />
          <stop offset="0.6" stopColor="#2d69c3" />
          <stop offset="0.74" stopColor="#2e6ac4" />
          <stop offset="0.9" stopColor="#3f7bd6" />
          <stop offset="1" stopColor="#3673ce" />
        </linearGradient>
        <filter id="soft" x="-60%" y="-30%" width="220%" height="160%">
          <feGaussianBlur stdDeviation="9" />
        </filter>
        <filter id="wide" filterUnits="userSpaceOnUse" x="1100" y="350" width="1450" height="1350">
          <feGaussianBlur stdDeviation="26" />
        </filter>
        <filter id="tiny" filterUnits="userSpaceOnUse" x="1100" y="350" width="1450" height="1350">
          <feGaussianBlur stdDeviation="3" />
        </filter>
      </defs>

      <path d={silhouette} fill="#245bb0" stroke="#4f8be0" strokeWidth={1.5} />

      <g clipPath="url(#face)">
        <rect x={1200} y={420} width={1240} height={1180} fill="#3877d1" />

        {/* left wing */}
        <path d="M1418 440L1480 440L1480 700L1415 730L1375 1312L1200 1312L1200 1180Z" fill="url(#left)" />
        <path d="M1330 980L1385 960L1360 1290L1240 1200Z" fill="#2a66c1" filter="url(#wide)" />
        <path d={curve(leftHem)} fill="none" stroke="#4173bb" strokeWidth={44} opacity={0.7} filter="url(#tiny)" />
        <path d="M1425 446L1240 1180" stroke="#4a7ec9" strokeWidth={48} opacity={0.7} filter="url(#tiny)" />
        <path d="M1460 500Q1410 560 1408 690" stroke="#467fd6" strokeWidth={30} fill="none" filter="url(#soft)" />

        {/* front panel */}
        <g clipPath="url(#panel)">
          <rect x={1340} y={620} width={900} height={1000} fill="url(#front)" />
          <rect x={1340} y={620} width={900} height={520} fill="url(#upper)" mask="url(#upperMask)" />
          <path d="M1418 728L1465 720L1450 1010L1425 1350L1400 1350Z" fill="#2262cb" opacity={0.7} filter="url(#soft)" />
          <path d="M1392 1320L1378 1500L1420 1560" stroke="#4173bd" strokeWidth={24} opacity={0.6} fill="none" filter="url(#tiny)" />
        </g>
        <path d="M1413 740L1378 1312L1366 1470" stroke="#4788ea" strokeWidth={8} opacity={0.8} fill="none" filter="url(#tiny)" />

        {/* overlap highlights */}
        <path d="M1470 776L1604 800L1681 828L1738 869L1760 930L1640 1000L1605 1075L1560 960L1476 800Z" fill="#2d72d8" opacity={0.8} />
        <path d="M1506 812L1600 838L1649 851L1690 874L1718 905L1706 927L1650 965L1612 1010L1560 920Z" fill="#2770de" />
        <g clipPath="url(#panel)">
          <path d="M1990 890Q2030 830 2046 790L2078 810L2110 975L2060 994L1980 985L1930 960Z" fill="#1e66d7" filter="url(#soft)" />
        </g>

        {/* right wing */}
        <g clipPath="url(#wing)">
          <rect x={2020} y={430} width={420} height={1100} fill="url(#right)" />
          <path d="M2205 960L2270 960L2370 1200L2330 1260L2240 1290L2200 1130Z" fill="#2660bb" filter="url(#wide)" />
          <path d="M2126 460L2400 1205" stroke="#4a7fcb" strokeWidth={40} opacity={0.7} filter="url(#tiny)" />
          <path d="M2110 500Q2062 590 2072 700L2106 880" stroke="#4a88e4" strokeWidth={18} fill="none" opacity={0.6} filter="url(#soft)" />
          <path d="M2176 1180L2200 1340" stroke="#4a88e4" strokeWidth={22} opacity={0.8} filter="url(#soft)" />
          <path d="M2222 1360Q2206 1420 2234 1470" stroke="#5a8fe0" strokeWidth={20} fill="none" opacity={0.8} filter="url(#soft)" />
        </g>

        {/* hem band */}
        <path d={curve(hem.slice(3, 18))} fill="none" stroke="#4577bd" strokeWidth={28} opacity={0.7} filter="url(#tiny)" />
      </g>

      {/* upper opening */}
      <path d={join(topEdge.slice(2, 11), rev(ribTop), rev(ribLeftOuter))} fill="#306bc6" />
      <g clipPath="url(#back)">
        <path d="M1461 457Q1560 488 1640 498Q1750 512 1861 497Q1980 480 2098 455" transform="translate(0 4)" fill="none" stroke="#3b70bd" strokeWidth={44} />
      </g>

      {/* upper ribs */}
      <path d={curve(ribTop) + "L2124 468" + seg(rev(ribBottom)) + "Z"} fill="#3974cf" />
      <path d={curve(ribLeftOuter) + "L1461 653" + seg(rev(ribLeftInner)) + "Z"} fill="#3f7bd5" />
      <path d="M1440 470Q1487 520 1487 570Q1487 620 1450 676" fill="none" stroke="#3069c8" strokeWidth={5} filter="url(#tiny)" />
      <path d="M1450 708Q1600 668 1690 666Q1760 664 1860 708Q1950 745 2030 710" fill="none" stroke="#2e69c6" strokeWidth={5} filter="url(#tiny)" />
      <ellipse cx={1700} cy={665} rx={34} ry={3} fill="#5f9bf5" filter="url(#tiny)" />
      <ellipse cx={1950} cy={729} rx={20} ry={3} fill="#62a0fa" filter="url(#tiny)" />

      {/* lower pocket */}
      <path d={curve(pocketOuter) + "Z"} fill="#3571cd" />
      <path d="M2135 905Q2148 980 2140 1060Q2158 1120 2150 1180Q2120 1285 2020 1297" fill="none" stroke="#447fd9" strokeWidth={12} filter="url(#tiny)" />
      <path d="M2128 900L2142 935" stroke="#2760b8" strokeWidth={14} filter="url(#tiny)" />
      <ellipse cx={2132} cy={988} rx={4} ry={16} fill="#63a0f8" filter="url(#tiny)" />
      <path d={join(pocketInner, pocketLip)} fill="url(#inside)" />
      <g clipPath="url(#pocket)">
        <path d="M1745 960L1935 1235" stroke="#3c78d4" strokeWidth={7} filter="url(#tiny)" />
        <path d="M1775 930L1990 1270" stroke="#5391ea" strokeWidth={18} opacity={0.7} filter="url(#soft)" />
        <path d="M1760 925Q1790 985 1900 975L1860 930Z" fill="#5288d6" opacity={0.6} />
      </g>
      <path d="M1720 932Q1640 980 1620 1050" fill="none" stroke="#2462c4" strokeWidth={12} filter="url(#tiny)" />
      <path d="M1850 936Q1950 990 2030 1002Q2090 1003 2112 984" fill="none" stroke="#2461c3" strokeWidth={13} />
      <path d="M1720 1103Q1790 1108 1830 1145" fill="none" stroke="#5b97f0" strokeWidth={3.5} filter="url(#tiny)" />
      <path d="M1640 1090Q1700 1103 1770 1110" fill="none" stroke="#2d68c5" strokeWidth={3} filter="url(#tiny)" />
      <path d="M1900 1232Q1960 1290 2020 1297" fill="none" stroke="#2d68c5" strokeWidth={4} filter="url(#tiny)" />
      <path d="M1796 925Q1812 942 1853 945Q1840 934 1812 924Z" fill="#fff" />

      {/* edges */}
      <g fill="none" stroke="#0a1a38" strokeWidth={2.2}>
        <path d={curve(topEdge.slice(2, 11))} />
        <path d={curve(ribLeftOuter)} />
        <path d={curve(ribLeftInner)} />
        <path d="M1440 475Q1443 462 1456 457L1467 454" />
        <path d={curve(ribTop)} />
        <path d={curve(ribBottom)} />
        <path d="M2096 451Q2112 452 2122 466L2125 458" />
        <path d="M1424 704Q1432 696 1440 696Q1456 698 1457 723" />
        <path d="M2058 706L2109 976" />
        <path d={curve(pocketOuter)} />
        <path d={curve(pocketInner)} />
        <path d="M1897 1242L1922 1225" />
        <path d="M2159 1222L2212 1496V1510L2206 1517" />
        <path d={curve(leftHem)} />
        <path d={curve(hem)} />
        <path d="M1794 925Q1812 943 1854 946" />
      </g>
      <path d="M1853 1150V1186" stroke="#1c4fa6" strokeWidth={2.5} />
      <text x={1874} y={1158} fill="#2a5fb5" fontSize={30} fontFamily="Liberation Sans, sans-serif">
        0
      </text>

      {/* manipulator arrow */}
      <path
        d="M1853 1087L1879 1111Q1881 1116 1875 1119L1861 1111V1150Q1853 1158 1845 1150V1111L1831 1119Q1825 1116 1827 1111Z"
        fill="#1b9fe6"
        stroke="#dfe8f5"
        strokeWidth={15}
        strokeLinejoin="round"
      />
      <path
        d="M1853 1087L1879 1111Q1881 1116 1875 1119L1861 1111V1150Q1853 1158 1845 1150V1111L1831 1119Q1825 1116 1827 1111Z"
        fill="#1b9fe6"
        stroke="#17384f"
        strokeWidth={4}
        strokeLinejoin="round"
      />
    </svg>
  );
}

/* ---------- edit dialog ---------- */

function FieldRow({ label, labelWidth, children }: { label: string; labelWidth: number; children: ReactNode }) {
  return (
    <div className="flex h-[75px] items-center">
      <div className="flex w-[238px]">
        <Fit w={labelWidth}>{label}</Fit>
      </div>
      {children}
    </div>
  );
}

function EditDialog() {
  return (
    <section className="relative mt-[130px] h-[458px] w-[624px] border-3 border-[#cccccc] bg-[#f1f1f1] text-[27.5px] leading-[46px] text-[#3f3f3f]">
      <div className="flex h-[60px] items-center gap-6 border-b-3 border-[#cccccc] pb-0.5 pl-[11px] text-[#6c6c6c]">
        <MinusDot />
        <Fit w={228} className="font-['Roboto','Liberation_Sans',sans-serif] text-[28px]">
          EDITAR ELEMENTO
        </Fit>
      </div>
      <div className="-mt-px h-[305px] border-b-3 border-[#cccccc] pl-[30px]">
        <FieldRow label="Caras/cuerpo" labelWidth={165}>
          <div className="flex h-[68px] w-[201px] items-center rounded-xs bg-[#0a95da] pl-5 text-white">
            <svg viewBox="-2 -2 28 48" className="h-10 w-[26px] overflow-visible">
              <path d={CURSOR} fill="#ececec" stroke="#444" strokeWidth={2.2} />
            </svg>
            <div className="ml-2.5 flex">
              <Fit w={127}>1 selecci...</Fit>
            </div>
          </div>
          <svg viewBox="0 0 24 24" className="ml-[27px] size-6">
            <path d="M2 2L22 22M22 2L2 22" stroke="#555" strokeWidth={5} />
          </svg>
        </FieldRow>
        <FieldRow label="Cadena tangente" labelWidth={205}>
          <svg viewBox="0 0 34 34" className="ml-3 size-[34px]">
            <defs>
              <linearGradient id="chk" x1="0" x2="0" y1="0" y2="1">
                <stop offset="0" stopColor="#bbb" />
                <stop offset="1" stopColor="#eee" />
              </linearGradient>
            </defs>
            <rect x={2} y={2} width={30} height={30} rx={6} fill="url(#chk)" stroke="#666" strokeWidth={2.8} />
            <path d="M7 18L14 26L26 7" fill="none" stroke="#222" strokeWidth={3.4} />
          </svg>
        </FieldRow>
        <FieldRow label="Espesor interior" labelWidth={190}>
          <div className="ml-0.5 flex h-16 w-[269px] items-center border-2 border-[#c4c4c4] bg-white pl-1.5">
            <Fit w={63}>3 mm</Fit>
          </div>
        </FieldRow>
        <FieldRow label="Dirección" labelWidth={112}>
          <div className="flex h-[68px] w-[272px] items-center rounded-sm border-3 border-[#dcdcdc] bg-white pl-1.5">
            <svg viewBox="0 0 38 40" className="h-10 w-[38px]">
              <path d="M4 1L37 16V39L22 31L4 22Z" fill="#f4853b" stroke="#222" strokeWidth={2.4} />
              <path d="M12 6L24 12V30L12 25Z" fill="#f9a76d" />
              <path d="M20 20L7 33" stroke="#000" strokeWidth={5} />
              <path d="M0 40V26L12 39Z" fill="#000" />
            </svg>
            <div className="ml-[13px] flex grow">
              <Fit w={82}>Interior</Fit>
            </div>
            <svg viewBox="0 0 15 10" className="mr-3 mb-1 h-2.5 w-[15px]">
              <path d="M0 0H15L7.5 10Z" fill="#333" />
            </svg>
          </div>
        </FieldRow>
      </div>
      <div className="flex h-[88px] items-center pl-[18px] text-[30px] text-[#777]">
        <svg viewBox="0 0 32 32" className="size-8">
          <circle cx={16} cy={16} r={15.6} fill="#000" />
          <path d="M16 6.5V11M12.5 14.5H16.5V24M11.5 24.5H21" stroke="#fff" strokeWidth={4} />
        </svg>
        <div className="ml-[217px] flex h-[52px] w-[150px] items-center justify-center border-2 border-[#bcbcbc] bg-[#e9e9e9]">
          <Fit w={103}>Aceptar</Fit>
        </div>
        <div className="ml-[26px] flex h-12 w-[150px] items-center justify-center border-2 border-[#bcbcbc] bg-[#e9e9e9]">
          <Fit w={126}>Cancelar</Fit>
        </div>
      </div>
    </section>
  );
}

const ViewCube = () => (
  <svg viewBox="3620 235 160 112" className="absolute top-[235px] left-[3620px] h-28 w-40">
    <path d="M3633 295L3636 350H3766L3767 328L3733 287Z" fill="#f0f0f1" />
    <path d="M3668 339L3676 324L3740 322L3748 347H3672Z" fill="#e5e7ea" />
    <path d="M3633 295L3733 287M3647 339L3767 328" stroke="#8b8b8b" strokeWidth={3} strokeDasharray="17 8" />
    <path d="M3633 295L3647 339V350M3736 290L3767 328" fill="none" stroke="#8b8b8b" strokeWidth={2.6} strokeDasharray="9 6" />
    <path d="M3634 296L3637 350M3766 328V350" stroke="#a2a2a2" strokeWidth={2.4} />
    <text
      transform="translate(3742 302) rotate(175) skewX(-20)"
      textLength={90}
      lengthAdjust="spacingAndGlyphs"
      fontSize={15}
      fontWeight="bold"
      fontFamily="Liberation Sans, sans-serif"
      fill="#9fa2a7"
    >
      SUPERIOR
    </text>
    <path d="M3735 271V290" stroke="#8383fa" strokeWidth={4.5} />
    <text x={3725} y={267} fontSize={33} fontWeight="bold" fontFamily="Liberation Sans, sans-serif" fill="#8f8fff">
      Z
    </text>
  </svg>
);

function ValueBox() {
  return (
    <div className="absolute top-[1262px] left-[2153px] flex h-[55px] w-[268px] items-center bg-[#f1f1f1] text-[27.5px] leading-[34px]">
      <svg viewBox="0 0 36 55" className="h-[55px] w-9">
        <path d="M13 4L18 9L13 14L18 19L13 24L18 29L13 34L18 39L13 44L18 49" fill="none" stroke="#d2d2d2" strokeWidth={2.6} strokeDasharray="4 2" />
        <path d="M28 2V53" stroke="#cfcfcf" strokeWidth={3.5} />
      </svg>
      <div className="flex h-[49px] w-[172px] items-center justify-center border-2 border-[#cacaca] bg-white pr-1 pb-0.5">
        <div className="flex border-r-2 border-black bg-[#0778d7] pr-px pl-0.5 text-white">
          <Fit w={62}>3 mm</Fit>
        </div>
      </div>
      <div className="ml-[27px] flex flex-col gap-1 pb-px">
        <div className="size-[9px] rounded-full bg-[#8c8c8c]" />
        <div className="size-[9px] rounded-full bg-[#8c8c8c]" />
        <div className="size-[9px] rounded-full bg-[#8c8c8c]" />
      </div>
    </div>
  );
}

export default function App() {
  return (
    <div className="relative h-[1732px] w-[3840px] overflow-hidden bg-white font-['Liberation_Sans',Arial,sans-serif]">
      <Toolbar />
      <ViewCube />
      <main className="flex">
        <Navigator />
        <div className="w-[2418px] pt-[205px]">
          <Model />
        </div>
        <EditDialog />
      </main>
      <ValueBox />
      <div className="absolute top-[892px] left-[1055px] flex h-[35px] w-[975px] items-center border-2 border-[#777] bg-[#f1f1f1] pl-[5px] font-['Open_Sans','Noto_Sans',sans-serif] text-[25.5px] leading-[30px] text-black">
        <Fit w={961}>Especifique el grosor o mantenga pulsada la tecla Ctrl/CMD para modificar selecciones</Fit>
      </div>
    </div>
  );
}
